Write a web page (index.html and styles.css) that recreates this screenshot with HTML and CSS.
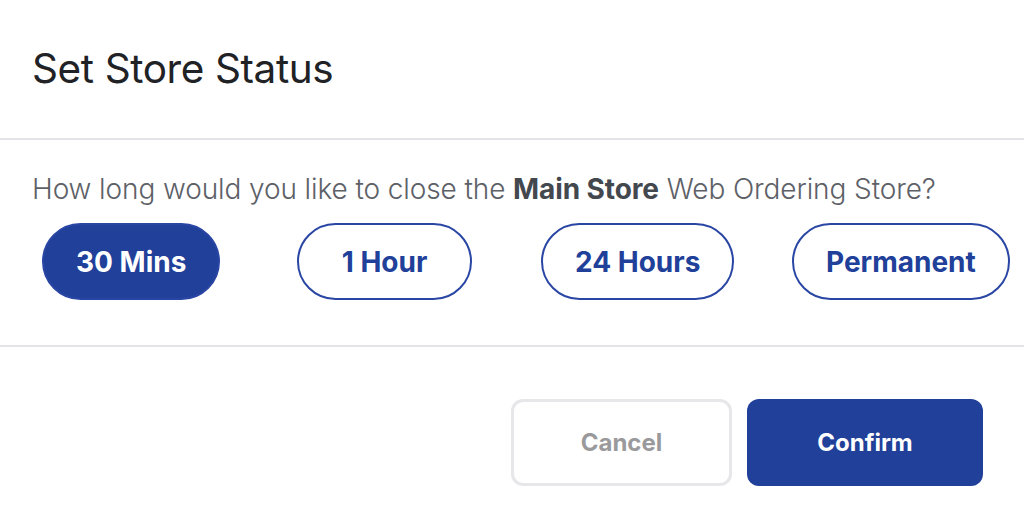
FILE: index.html
```html
<!DOCTYPE html>
<html>
<head>
<title>Set Store Status</title>
<meta name="viewport" content="width=device-width, initial-scale=1.0">
<link rel="stylesheet" href="styles.css">
</head>
<body>

<article class="modal">

<header class="modal-head">
<h2>Set Store Status</h2>
</header>

<section class="modal-body">
<p>How long would you like to close the <b>Main Store</b> Web Ordering Store?</p>
<div class="options">
<button class="pill active">30 Mins</button>
<button class="pill">1 Hour</button>
<button class="pill">24 Hours</button>
<button class="pill">Permanent</button>
</div>
</section>

<footer class="modal-foot">
<button class="btn cancel">Cancel</button>
<button class="btn confirm">Confirm</button>
</footer>

</article>

</body>
</html>
```

FILE: styles.css
```css
body {
   background: #fff;
   color: #222;
   font-family: Inter, 'Noto Sans', sans-serif;
   margin: 0;}

button {
   font-family: inherit;
   cursor: pointer;}

.modal {
   width: 1024px;}

.modal-head {
   border-bottom: 2px solid #e3e3e8;
   box-sizing: border-box;
   height: 140px;
   padding: 45px 32px 0 32px;}

.modal-head h2 {
   color: #202226;
   font-size: 40.5px;
   font-weight: 400;
   letter-spacing: -0.4px;
   line-height: 48px;
   margin: 0;}

.modal-body {
   border-bottom: 2px solid #e3e3e8;
   box-sizing: border-box;
   height: 207px;
   padding: 31px 0 0 32px;}

.modal-body p {
   color: #5d6167;
   font-size: 28px;
   font-weight: 300;
   letter-spacing: -0.1px;
   line-height: 36px;
   margin: 0 0 16px 0;}

.modal-body b {
   color: #43484e;
   font-weight: 700;}

.options {
   display: grid;
   grid-template-columns: 255px 244px 251px 220px;}

.pill {
   background: #fff;
   border: 2px solid #2a46a4;
   border-radius: 40px;
   color: #21409a;
   font-size: 28px;
   font-weight: 700;
   height: 77px;
   justify-self: start;
   margin-left: 10px;
   min-width: 175px;
   padding: 0 32px;}

.pill.active {
   background: #21409a;
   color: #fff;}

.modal-foot {
   display: flex;
   gap: 15px;
   justify-content: flex-end;
   padding: 52px 41px 0 0;}

.btn {
   border-radius: 12px;
   font-size: 24px;
   font-weight: 700;
   height: 87px;}

.cancel {
   background: #fff;
   border: 3px solid #e7e7e9;
   color: #9a9a9c;
   width: 221px;}

.confirm {
   background: #21409a;
   border: none;
   color: #fff;
   width: 236px;}
```
